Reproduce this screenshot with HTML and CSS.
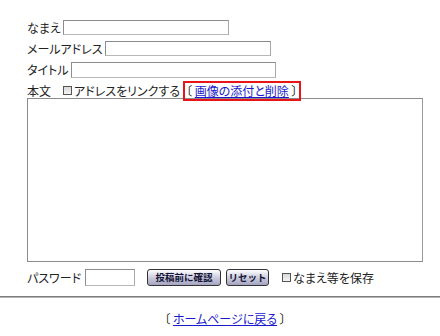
FILE: index.html
```html
<!DOCTYPE html>
<html lang="ja">
<head>
    <meta charset="UTF-8">
    <title>投稿フォーム</title>
    <link rel="stylesheet" href="styles.css">
</head>
<body>
    <form class="post-form">
        <div class="row">
            <span class="label">なまえ</span>
            <input type="text" class="field name-field">
        </div>
        <div class="row">
            <span class="label">メールアドレス</span>
            <input type="text" class="field mail-field">
        </div>
        <div class="row">
            <span class="label">タイトル</span>
            <input type="text" class="field title-field">
        </div>
        <div class="row">
            <span class="label">本文</span>
            <label class="check"><span class="box"></span>アドレスをリンクする</label>
            <span class="attach">〔&nbsp;<a href="#">画像の添付と削除</a>&nbsp;〕</span>
        </div>
        <textarea class="body-field"></textarea>
        <div class="row submit-row">
            <span class="label">パスワード</span>
            <input type="password" class="field pass-field">
            <button type="button" class="btn confirm">投稿前に確認</button>
            <button type="reset" class="btn reset">リセット</button>
            <label class="check"><span class="box"></span>なまえ等を保存</label>
        </div>
    </form>

    <hr class="divider">

    <p class="back">〔&nbsp;<a href="#">ホームページに戻る</a>&nbsp;〕</p>
</body>
</html>
```

FILE: styles.css
```css
body {
    margin: 0;
    font-family: "Noto Sans CJK JP", "DejaVu Sans", sans-serif;
    font-size: 12px;
    font-feature-settings: "palt";
    color: #222;
    background: #fff;
}
a {
    color: #1a1acc;
}
.post-form {
    padding: 17px 0 0 27px;
}
.row {
    display: flex;
    align-items: center;
    height: 21px;
}
.label {
    margin-right: 2px;
}
.field {
    box-sizing: border-box;
    height: 15px;
    border: 1px solid #8c8c8c;
    border-right-color: #a8a8a8;
    border-bottom-color: #b8b8b8;
    padding: 0 2px;
    font-size: 11px;
    background: #fff;
}
.name-field {
    width: 166px;
}
.mail-field {
    width: 166px;
}
.title-field {
    width: 205px;
    height: 16px;
}
.check {
    display: flex;
    align-items: center;
}
.box {
    box-sizing: border-box;
    width: 9px;
    height: 9px;
    margin-right: 2px;
    border: 1px solid #555;
    background: linear-gradient(#d8d8d8, #f4f4f4);
}
.row .check {
    margin-left: 10px;
}
.attach {
    box-sizing: border-box;
    height: 20px;
    display: flex;
    align-items: center;
    margin-left: 3px;
    padding: 0 1px;
    border: 2px solid #e8141a;
}
.body-field {
    display: block;
    box-sizing: border-box;
    width: 396px;
    height: 164px;
    margin: -3px 0 0;
    border: 1px solid #8c8c8c;
    border-right-color: #9a9a9a;
    resize: none;
}
.submit-row {
    height: 22px;
    margin-top: 4px;
}
.submit-row .label {
    margin-right: 4px;
}
.pass-field {
    width: 50px;
    height: 17px;
}
.btn {
    box-sizing: border-box;
    height: 17px;
    padding: 0;
    border: 1px solid #333;
    border-radius: 3px;
    background: linear-gradient(#fdfdff, #c4c4d8 60%, #a4a4c0);
    color: #141438;
    font-family: inherit;
    font-size: 9.5px;
    font-weight: bold;
}
.confirm {
    width: 74px;
    margin-left: 12px;
}
.reset {
    width: 43px;
    margin-left: 5px;
}
.submit-row .check {
    margin-left: 13px;
}
.divider {
    margin: 8px 0 0;
    height: 0;
    border: 0;
    border-top: 1px solid #7c7c7c;
    border-bottom: 1px solid #b4b4b4;
}
.back {
    margin: 12px 0 0;
    padding-left: 10px;
    text-align: center;
}
```
